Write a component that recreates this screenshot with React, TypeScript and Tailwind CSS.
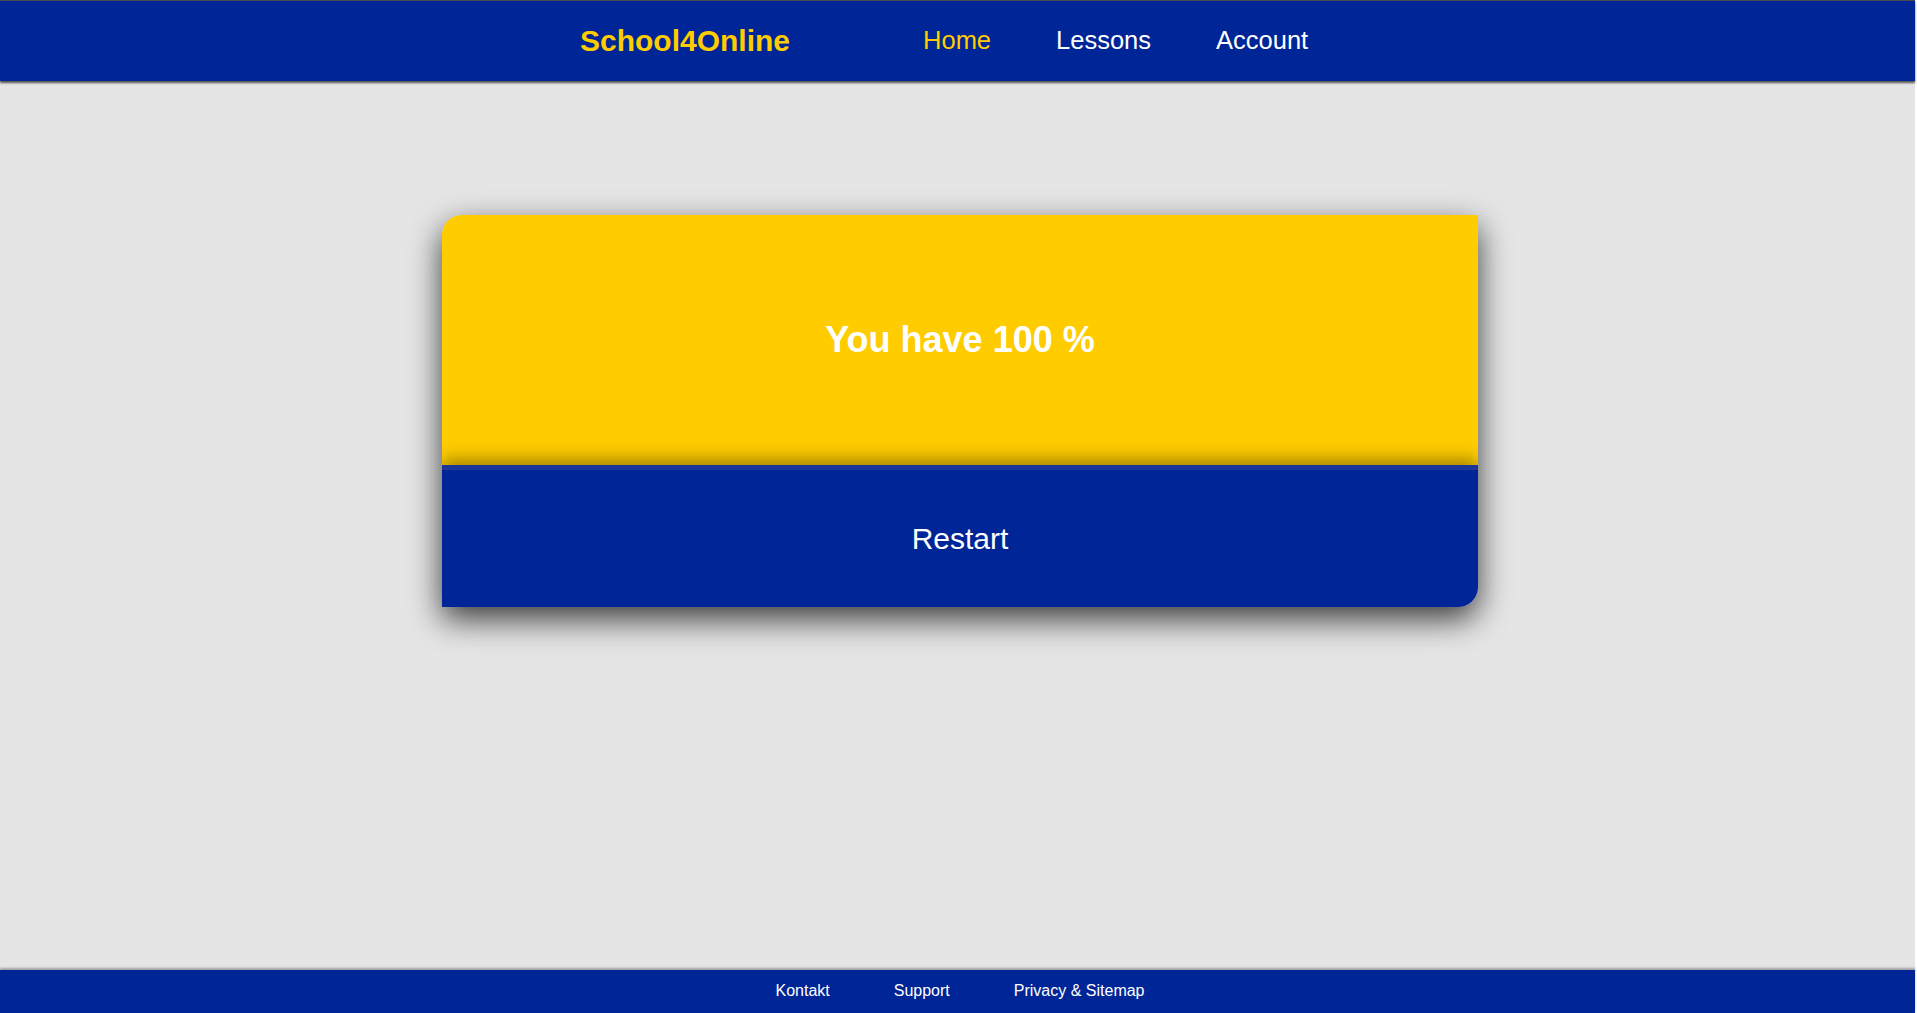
const navLinks = [
  { label: "Home", active: true },
  { label: "Lessons", active: false },
  { label: "Account", active: false },
]

const footerLinks = ["Kontakt", "Support", "Privacy & Sitemap"]

export default function App() {
  return (
    <div className="w-full h-screen bg-white font-['Liberation_Sans',Arial,sans-serif]">
      <div className="w-[1915px] h-full flex flex-col bg-[#e5e5e5]">
        {/* Header */}
        <header className="relative z-10 h-[81px] shrink-0 border-t border-[#4a4a4a] bg-[#002596] shadow-[0_2px_2px_rgba(0,0,0,0.65)] flex items-center pl-[580px]">
          <div className="text-[30px] font-bold text-[#ffcc00] leading-none">School4Online</div>
          <nav className="ml-[133px] flex gap-[65px]">
            {navLinks.map((link) => (
              <a
                key={link.label}
                href="#"
                className={`text-[25.5px] leading-none ${link.active ? "text-[#ffcc00]" : "text-white"}`}
              >
                {link.label}
              </a>
            ))}
          </nav>
        </header>

        {/* Result card */}
        <main className="flex-1 pt-[134px] pl-[442px]">
          <div className="w-[1036px] rounded-tl-[20px] rounded-br-[20px] overflow-hidden shadow-[0_12px_32px_rgba(0,0,0,0.75)]">
            <div className="h-[250px] bg-[#ffcc00] flex items-center justify-center">
              <h2 className="text-[36px] font-bold text-white leading-none">You have 100 %</h2>
            </div>
            <button className="relative w-full h-[142px] border-t-[5px] border-[#1b3696] bg-[#002596] shadow-[0_-6px_16px_rgba(0,0,0,0.35)] flex items-center justify-center text-[30px] text-white leading-none">
              Restart
            </button>
          </div>
        </main>

        {/* Footer */}
        <footer className="h-[43px] shrink-0 bg-[#002596] shadow-[0_-2px_2px_rgba(0,0,0,0.3)] flex items-center justify-center gap-[64px] pl-[5px] pb-[1px]">
          {footerLinks.map((link) => (
            <a key={link} href="#" className="text-[16px] text-white leading-none">
              {link}
            </a>
          ))}
        </footer>
      </div>
    </div>
  )
}
